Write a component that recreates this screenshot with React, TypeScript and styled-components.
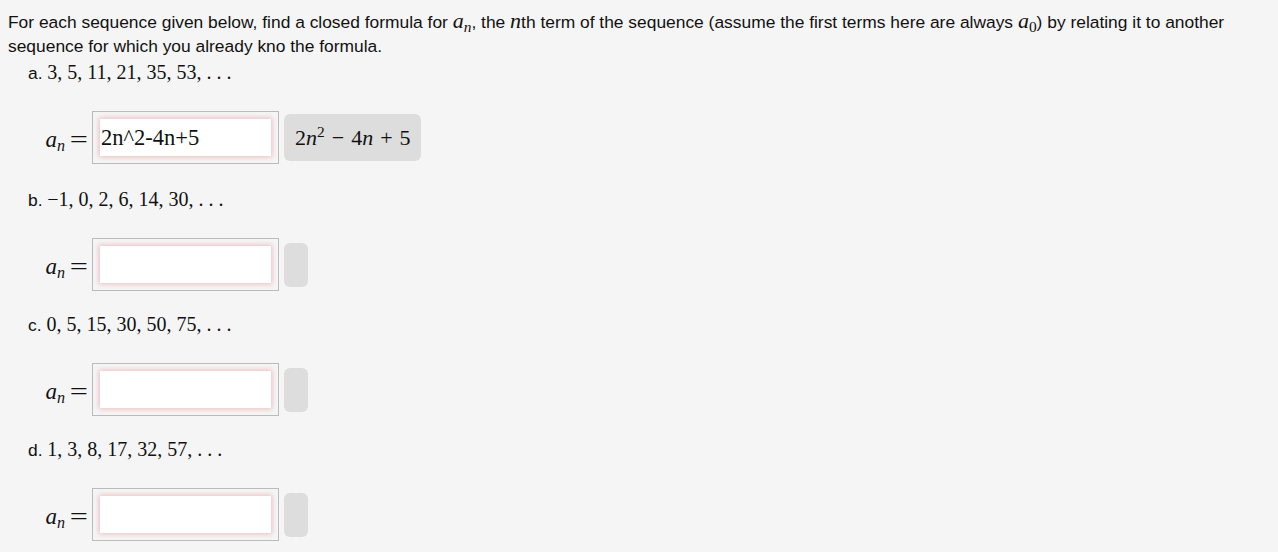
import React from "react";
import styled, { createGlobalStyle } from "styled-components";

const Global = createGlobalStyle`
  html, body { margin: 0; padding: 0; background: #f5f5f5; }
  body { font-family: "Liberation Sans", Arial, sans-serif; color: #111; }
`;

const Page = styled.div`
  padding: 10px 8px 12px 8px;
`;

const Intro = styled.p`
  margin: 0 0 3px 0;
  font-size: 17.4px;
  line-height: 24px;
`;

const M = styled.span<{ $size?: number }>`
  font-family: "Liberation Serif", "DejaVu Serif", serif;
  font-size: ${(p) => p.$size ?? 20}px;
  line-height: 1;
`;

const V = styled.i`
  font-family: "Liberation Serif", "DejaVu Serif", serif;
  font-style: italic;
`;

const Sub = styled.sub`
  font-size: 0.7em;
  vertical-align: -0.25em;
  line-height: 0;
`;

const Sup = styled.sup`
  font-size: 0.7em;
  vertical-align: 0.5em;
  line-height: 0;
`;

const Part = styled.section<{ $tall?: boolean }>`
  display: flex;
  flex-direction: column;
  gap: 26px;
  margin-bottom: ${(p) => (p.$tall ? 24 : 22)}px;
`;

const PartLabel = styled.div`
  padding-left: 20px;
  font-size: 17.4px;
  line-height: 24px;
  height: 24px;
  white-space: nowrap;
`;

const Row = styled.div`
  display: flex;
  align-items: center;
  height: 53px;
`;

const Lhs = styled.span`
  width: 80px;
  text-align: right;
  margin-right: 4px;
  font-family: "Liberation Serif", "DejaVu Serif", serif;
  font-size: 23px;
  padding-top: 5px;
  white-space: nowrap;
`;

const Eq = styled.span`
  display: inline-block;
  margin-left: 10px;
  transform: scaleX(1.4);
  transform-origin: right center;
`;

const Frame = styled.div`
  border: 1px solid #bbb;
  padding: 7px;
  display: flex;
`;

const Input = styled.div`
  width: 171px;
  height: 37px;
  background: #fff;
  box-shadow: 0 0 5px 1px rgba(220, 80, 80, 0.35);
  font-family: "Liberation Serif", "DejaVu Serif", serif;
  font-size: 22.5px;
  line-height: 38px;
  padding-left: 1px;
  box-sizing: border-box;
  white-space: nowrap;
`;

const Preview = styled.div<{ $empty?: boolean }>`
  margin-left: 5px;
  background: #dddddd;
  border-radius: 6px;
  height: ${(p) => (p.$empty ? "44px" : "47px")};
  width: ${(p) => (p.$empty ? "24px" : "auto")};
  padding: ${(p) => (p.$empty ? "0" : "0 10px 0 11px")};
  display: flex;
  align-items: center;
  box-sizing: border-box;
`;

const Formula = styled.span`
  font-family: "Liberation Serif", "DejaVu Serif", serif;
  font-size: 22px;
  white-space: nowrap;
`;

const Op = styled.span`
  margin: 0 7px;
`;

const An = () => (
  <>
    <V>a</V>
    <Sub>
      <V>n</V>
    </Sub>
  </>
);

const parts: { letter: string; seq: string; value?: string }[] = [
  { letter: "a", seq: "3, 5, 11, 21, 35, 53, . . .", value: "2n^2-4n+5" },
  { letter: "b", seq: "\u22121, 0, 2, 6, 14, 30, . . ." },
  { letter: "c", seq: "0, 5, 15, 30, 50, 75, . . ." },
  { letter: "d", seq: "1, 3, 8, 17, 32, 57, . . ." },
];

export default function App() {
  return (
    <Page>
      <Global />
      <Intro>
        For each sequence given below, find a closed formula for{" "}
        <M $size={22}>
          <An />
        </M>
        , the <M $size={22}><V>n</V></M>th term of the sequence (assume the first terms here are always{" "}
        <M $size={22}>
          <V>a</V>
          <Sub>0</Sub>
        </M>
        ) by relating it to another sequence for which you already kno the formula.
      </Intro>
      {parts.map((p) => (
        <Part key={p.letter} $tall={!!p.value}>
          <PartLabel>
            {p.letter}. <M>{p.seq}</M>
          </PartLabel>
          <Row>
            <Lhs>
              <An />
              <Eq>=</Eq>
            </Lhs>
            <Frame>
              <Input>{p.value ?? ""}</Input>
            </Frame>
            {p.value ? (
              <Preview>
                <Formula>
                  2<V>n</V>
                  <Sup>2</Sup>
                  <Op>−</Op>4<V>n</V>
                  <Op>+</Op>5
                </Formula>
              </Preview>
            ) : (
              <Preview $empty />
            )}
          </Row>
        </Part>
      ))}
    </Page>
  );
}
